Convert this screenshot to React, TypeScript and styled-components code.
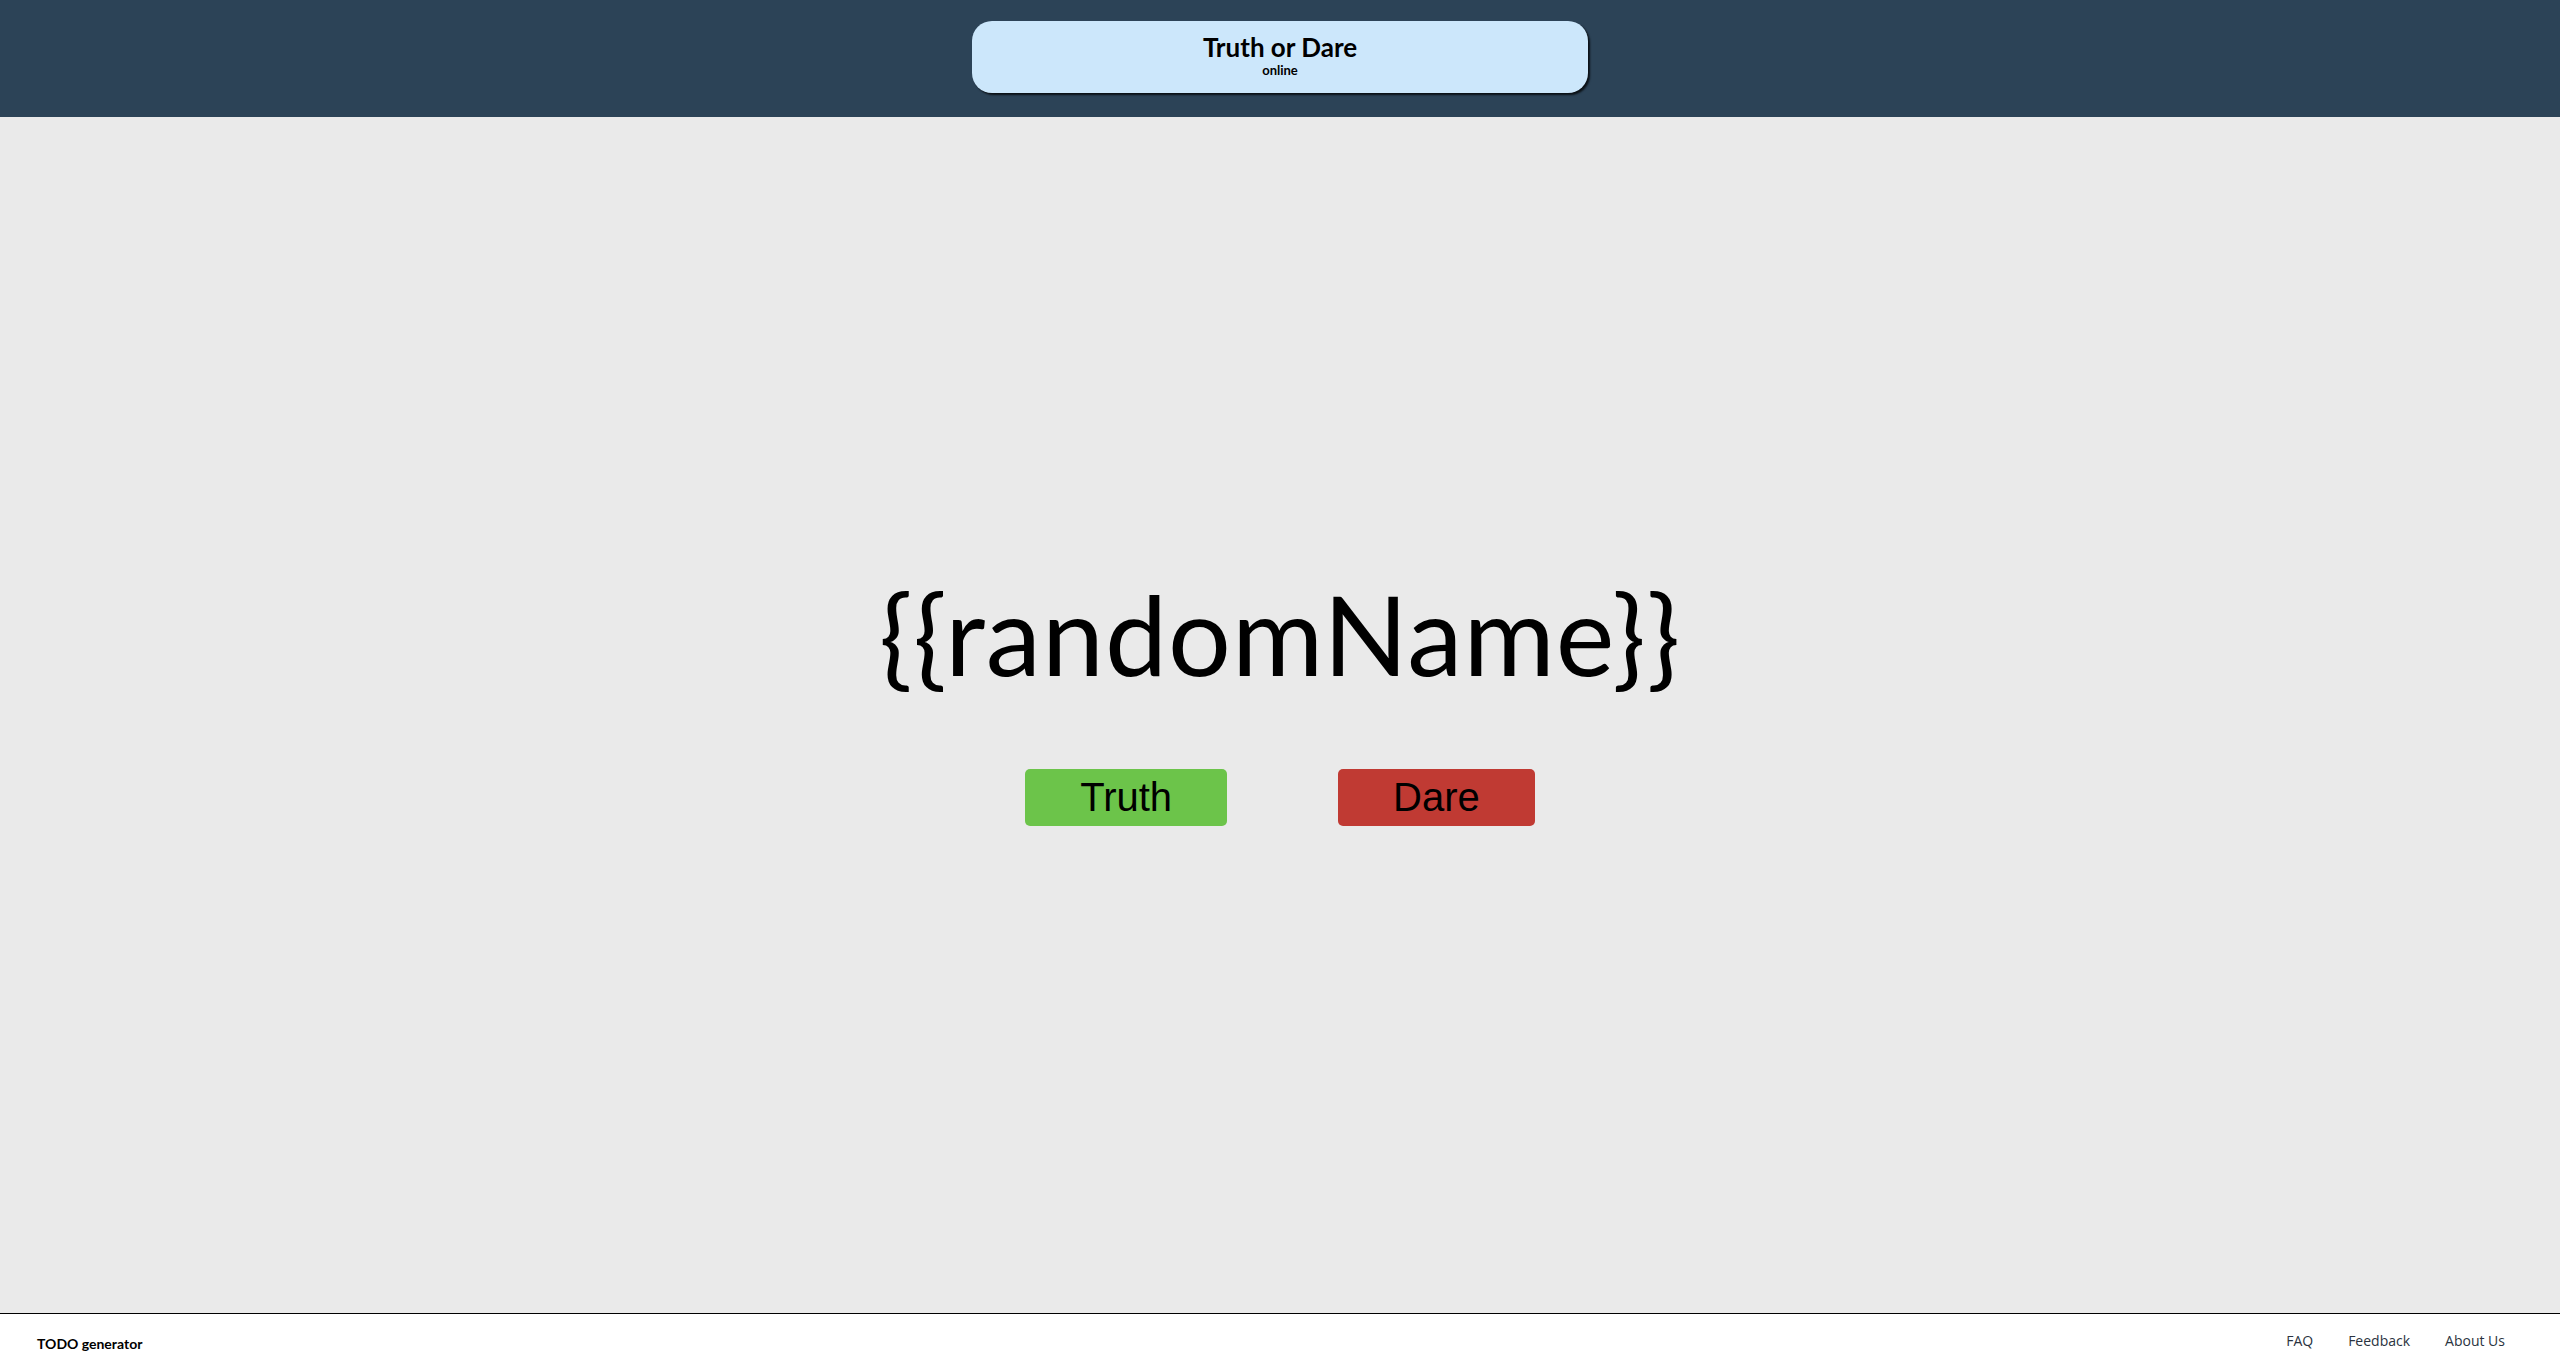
import React from "react";
import styled, { createGlobalStyle } from "styled-components";

const Global = createGlobalStyle`
  html, body { margin: 0; padding: 0; }
  body { font-family: "Open Sans", "Liberation Sans", sans-serif; background: #eaeaea; }
  * { box-sizing: border-box; }
`;

const Page = styled.div`
  display: flex;
  flex-direction: column;
  min-height: 100vh;
`;

const Header = styled.header`
  height: 117px;
  background: #2c4357;
  display: flex;
  justify-content: center;
  padding-top: 21px;
`;

const TitlePill = styled.div`
  width: 616px;
  height: 72px;
  background: #cce7fb;
  border-radius: 20px;
  box-shadow: 2px 2px 2px rgba(0, 0, 0, 0.75);
  display: flex;
  flex-direction: column;
  align-items: center;
  justify-content: center;
  padding-bottom: 4px;
  font-family: Lato, "Open Sans", sans-serif;
  color: #000;
`;

const Title = styled.h1`
  margin: 0;
  font-size: 26px;
  font-weight: 700;
  line-height: 30px;
`;

const Subtitle = styled.div`
  font-size: 13px;
  font-weight: 700;
  line-height: 16px;
`;

const Main = styled.main`
  flex: 1;
  background: #eaeaea;
  display: flex;
  flex-direction: column;
  align-items: center;
  justify-content: center;
  padding-bottom: 38px;
`;

const Name = styled.div`
  font-family: Lato, "Open Sans", sans-serif;
  font-size: 111px;
  line-height: 132px;
  letter-spacing: 1px;
  color: #000;
`;

const ButtonRow = styled.div`
  display: flex;
  gap: 111px;
  margin-top: 70px;
`;

const ChoiceButton = styled.button<{ $color: string }>`
  background: ${(p) => p.$color};
  border: none;
  border-radius: 5px;
  height: 57px;
  padding: 0 55px;
  font-family: Arial, "Liberation Sans", sans-serif;
  font-size: 40px;
  line-height: 57px;
  color: #000;
  cursor: pointer;
`;

const Footer = styled.footer`
  height: 53px;
  background: #fff;
  border-top: 1px solid #000;
  display: flex;
  align-items: center;
  justify-content: space-between;
  padding: 0 55px 0 37px;
  font-family: "Open Sans", "Liberation Sans", sans-serif;
`;

const Brand = styled.div`
  font-family: Lato, "Open Sans", sans-serif;
  font-size: 14px;
  font-weight: 700;
  color: #000;
  padding-top: 7px;
`;

const Links = styled.nav`
  display: flex;
  gap: 35px;
  padding-top: 1px;
`;

const FooterLink = styled.a`
  font-size: 14px;
  color: #2a3340;
  text-decoration: none;
`;

export default function App() {
  return (
    <Page>
      <Global />
      <Header>
        <TitlePill>
          <Title>Truth or Dare</Title>
          <Subtitle>online</Subtitle>
        </TitlePill>
      </Header>
      <Main>
        <Name>{"{{randomName}}"}</Name>
        <ButtonRow>
          <ChoiceButton $color="#6cc44a">Truth</ChoiceButton>
          <ChoiceButton $color="#c03a33">Dare</ChoiceButton>
        </ButtonRow>
      </Main>
      <Footer>
        <Brand>TODO generator</Brand>
        <Links>
          <FooterLink href="#">FAQ</FooterLink>
          <FooterLink href="#">Feedback</FooterLink>
          <FooterLink href="#">About Us</FooterLink>
        </Links>
      </Footer>
    </Page>
  );
}
